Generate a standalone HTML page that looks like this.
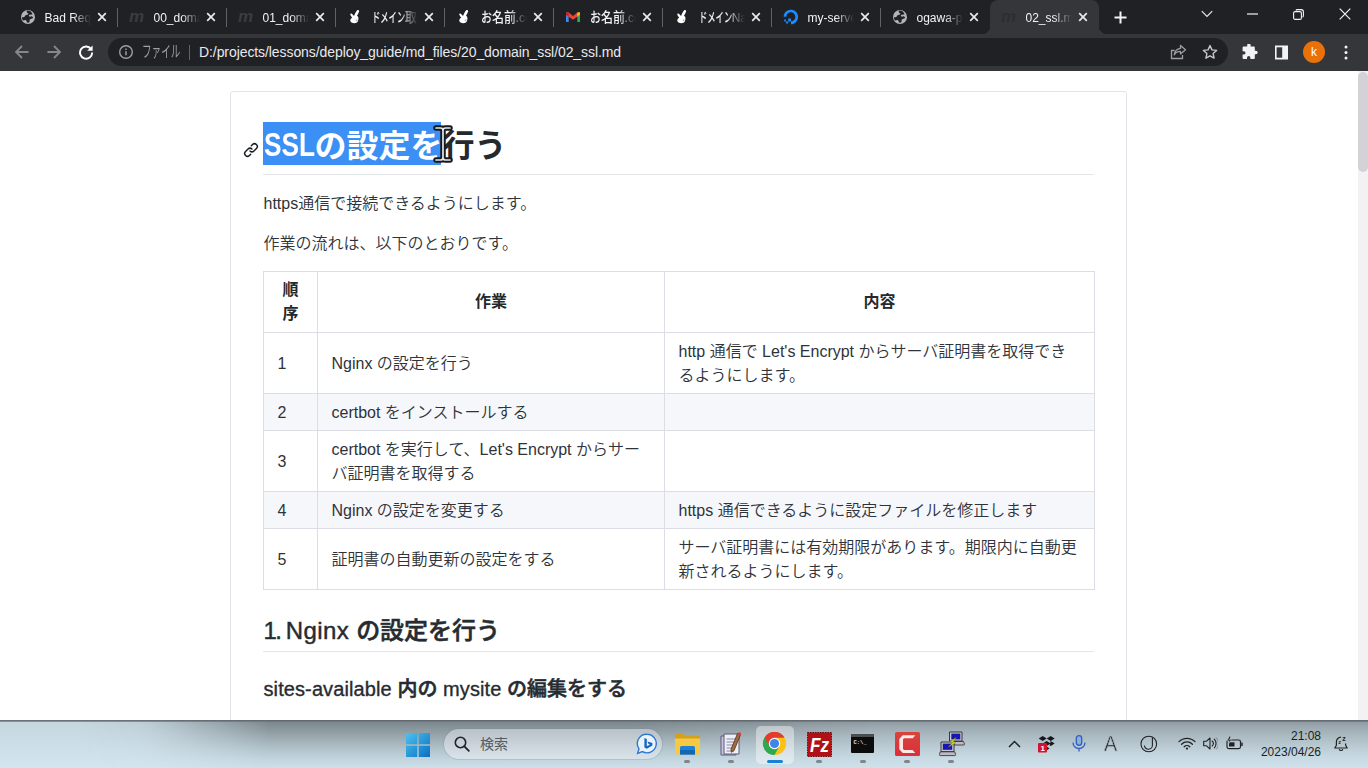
<!DOCTYPE html>
<html lang="ja">
<head>
<meta charset="utf-8">
<title>02_ssl.md</title>
<style>
*{box-sizing:border-box;margin:0;padding:0}
html,body{width:1368px;height:768px;overflow:hidden;background:#fff}
body{position:relative;font-family:"Liberation Sans","Noto Sans CJK JP",sans-serif;color:#24292e}
.abs{position:absolute}
/* ---------- browser chrome ---------- */
#tabstrip{position:absolute;left:0;top:0;width:1368px;height:34px;background:#202124}
#toolbar{position:absolute;left:0;top:34px;width:1368px;height:37px;background:#35363a}
.tab{position:absolute;top:0;height:34px;width:109px;color:#f1f3f4;font-size:12px}
.tab .ttl{position:absolute;left:36px;top:9px;width:46px;height:18px;line-height:18px;white-space:nowrap;overflow:hidden;
  -webkit-mask-image:linear-gradient(90deg,#000 60%,transparent 100%);mask-image:linear-gradient(90deg,#000 60%,transparent 100%)}
.tab .ttl i{font-style:normal;display:inline-block;transform-origin:0 50%}
.tab .ttl i{font-size:13.500px;font-weight:500;vertical-align:top}
.tab .ttl i.k4{transform:scaleX(.615);margin-right:-20.800px}
.tab .ttl i.k1{transform:scaleX(.82);margin-right:-2.400px}
.tab .ttl i.kj{transform:scaleX(.89);margin-right:-3px}
.tab .fav{position:absolute;left:11.500px;top:9px;width:16px;height:16px}
.tab .x{position:absolute;left:88px;top:12px;width:10px;height:10px}
.tab .sep{position:absolute;left:108.500px;top:8px;width:1px;height:19px;background:#5f6368}
#active{position:absolute;left:989.500px;top:0;width:109px;height:34px;background:#35363a;border-radius:8px 8px 0 0}
#active:before,#active:after{content:"";position:absolute;bottom:0;width:8px;height:8px;background:radial-gradient(circle at 0 0,transparent 8px,#35363a 8.5px)}
#active:before{left:-8px}
#active:after{right:-8px;background:radial-gradient(circle at 100% 0,transparent 8px,#35363a 8.5px)}
#omni{position:absolute;left:108px;top:4px;width:1120px;height:28px;border-radius:14px;background:#202124}
#omni .file{position:absolute;left:34px;top:4.500px;font-size:16px;line-height:18px;color:#9aa0a6;white-space:nowrap}
#omni .file i{font-style:normal;display:inline-block;transform-origin:0 50%;transform:scaleX(.6)}
#omni .osep{position:absolute;left:81px;top:7px;width:1px;height:15px;background:#5f6368}
#omni .url{position:absolute;left:91px;top:5px;font-size:14px;line-height:18px;color:#e8eaed;white-space:nowrap;letter-spacing:-.080px}
/* ---------- page ---------- */
#page{position:absolute;left:0;top:71px;width:1368px;height:649px;background:#fff;overflow:hidden}
#box{position:absolute;left:230px;top:20px;border-radius:3px;width:897px;height:900px;border:1px solid #e1e4e8;padding:32px}
#md{font-size:16px;line-height:24px;color:#2e3339;font-weight:350}
#md h1{color:#24292e;font-size:32px;line-height:40px;font-weight:700;padding-bottom:10px;border-bottom:1px solid #e4e6ea;margin:0 0 16px;position:relative;white-space:nowrap}
#md h1 .bg{position:absolute;left:.300px;top:-2px;width:178px;height:42.500px;background:#3c8ff5}
#md h1 .t{position:relative;top:1.700px;left:.500px}
#md h1 .sel{color:#fff}
#md h1 .lat{display:inline-block;transform:scale(.82,1.06);transform-origin:0 100%;margin-right:-11.200px}
#md h2{color:#262b31;font-size:24px;line-height:30px;font-weight:500;-webkit-text-stroke:.550px #282d33;padding-bottom:7px;border-bottom:1px solid #e4e6ea;margin:24px 0 16px;white-space:nowrap}
#md h3{color:#262b31;font-size:20px;line-height:25px;font-weight:500;-webkit-text-stroke:.550px #282d33;margin:24px 0 16px;white-space:nowrap}
#md h2 .t{position:relative;top:2px;left:.500px}
#md h2 .lat{font-weight:400;-webkit-text-stroke:.450px #282d33;letter-spacing:-.250px}
#md h3 .t{position:relative;top:1px;left:.500px}
#md h3 .lat{font-weight:400;-webkit-text-stroke:.350px #282d33;letter-spacing:.100px}
#md p{margin:0 0 16px;white-space:nowrap;transform:translate(.500px,.800px)}
#md table{border-collapse:collapse;table-layout:fixed;width:831px;margin:0 0 16px}
#md th,#md td{border:1px solid #dddee5;padding:6.800px 12.500px 5.200px 13.500px;vertical-align:middle;text-align:left}
#md th{color:#24292e;font-weight:700;text-align:center;padding:6px 13px 6px}
#md tr.alt td{background:#f6f7fb}
#scroll{position:absolute;left:1358px;top:0;width:10px;height:649px;background:#f2f1f4}
#scroll b{position:absolute;left:0;top:1px;width:10px;height:100px;border-radius:5px;background:#d3d2d6}
/* ---------- taskbar ---------- */
#task{position:absolute;left:0;top:720px;width:1368px;height:48px;
  background:linear-gradient(180deg,#8a969d 0,#9ca9b0 15%,#adbcc3 35%,#bdced6 60%,#c8dae3 80%,#cfe1eb 100%)}
#task .dark{position:absolute;left:150px;top:0;width:750px;height:48px;background:linear-gradient(180deg,#77828a 0,#8b989e 20%,#9fadb4 40%,#b1c2ca 60%,#c1d3dc 80%,#cddfe9 100%);-webkit-mask-image:linear-gradient(90deg,transparent 0,#000 120px,#000 480px,transparent 720px);mask-image:linear-gradient(90deg,transparent 0,#000 120px,#000 480px,transparent 720px)}
#task .lite{position:absolute;left:0;top:0;width:300px;height:48px;background:linear-gradient(180deg,#c5d6df,#d3e5ee);-webkit-mask-image:linear-gradient(90deg,#000 0,#000 70px,rgba(0,0,0,.85) 140px,rgba(0,0,0,.4) 200px,transparent 270px);mask-image:linear-gradient(90deg,#000 0,#000 70px,rgba(0,0,0,.85) 140px,rgba(0,0,0,.4) 200px,transparent 270px)}
#task .topline{position:absolute;left:0;top:0;width:1368px;height:2px;background:linear-gradient(180deg,#5e656a,rgba(110,120,126,.6))}
#search{position:absolute;left:444px;top:9px;width:218px;height:30px;border-radius:15px;background:linear-gradient(180deg,#b9c1c7,#d9e4ea);box-shadow:0 0 0 1px rgba(120,135,145,.25)}
#search span{position:absolute;left:36px;top:6px;font-size:14px;line-height:18px;color:#555b60}
.dot{position:absolute;top:40px;width:6px;height:3px;border-radius:2px;background:#7d868c}
#clock{position:absolute;right:47px;top:8px;text-align:right;font-size:12px;line-height:16px;color:#1b1f23;white-space:nowrap}
</style>
</head>
<body>

<!-- ================= TAB STRIP ================= -->
<div id="tabstrip">
  <div id="active"></div>
  <!--TABS-->
  <div class="tab" style="left:8.5px"><svg class="fav" viewBox="0 0 16 16"><circle cx="8" cy="8" r="7" fill="#b0b4b9"/><path d="M7.2 1.6c-1 .9-.4 2 .5 2.4 1.2.5.6 1.6-.4 1.7-1.3.1-2.2.6-2.6 1.7-.4 1-1.600 1.200-2.600 .700-.200 1.300 .100 2.500 .700 3.500 1-.200 2.100-.900 2.900-.500 1.100 .500 .600 1.700 1.500 2.300 .8.5 1.900 .2 2.300-.700 .4-.900-.300-1.600 .400-2.300 .7-.700 2-.300 2.700-1.100 .6-.700 .300-1.600-.500-1.900-1-.300-1.900.6-2.800 .100-.8-.500-.400-1.500 .400-1.800 1-.300 2.300 .100 2.800-.800C11.600 2.700 9.500 1.500 7.200 1.600z" fill="#202124"/></svg><div class="ttl">Bad Requ</div><svg class="x" viewBox="0 0 10 10"><path d="M1.200 1.200l7.600 7.600M8.800 1.200L1.200 8.800" stroke="#e8eaed" stroke-width="1.700" fill="none"/></svg><div class="sep"></div></div>
  <div class="tab" style="left:117.5px"><svg class="fav" viewBox="0 0 16 16"><text x="0" y="13" font-family="Liberation Sans,sans-serif" font-style="italic" font-weight="700" font-size="17" fill="#3b3c40">m</text></svg><div class="ttl">00_doma</div><svg class="x" viewBox="0 0 10 10"><path d="M1.200 1.200l7.600 7.600M8.800 1.200L1.200 8.800" stroke="#e8eaed" stroke-width="1.700" fill="none"/></svg><div class="sep"></div></div>
  <div class="tab" style="left:226.5px"><svg class="fav" viewBox="0 0 16 16"><text x="0" y="13" font-family="Liberation Sans,sans-serif" font-style="italic" font-weight="700" font-size="17" fill="#3b3c40">m</text></svg><div class="ttl">01_doma</div><svg class="x" viewBox="0 0 10 10"><path d="M1.200 1.200l7.600 7.600M8.800 1.200L1.200 8.800" stroke="#e8eaed" stroke-width="1.700" fill="none"/></svg><div class="sep"></div></div>
  <div class="tab" style="left:335.5px"><svg class="fav" viewBox="0 0 16 16"><path d="M10.200 1.200c1-.600 2.200 .100 1.900 1.300-.400 1.500-1.400 2.900-2.100 4.200 .900 .500 1.500 1.400 1.400 2.500 .100 1.600-.300 3.600-1.900 4.500-1.500 .700-3.500 .500-5-.200-1.300-.700-1.500-2.300-.800-3.500 .300-.600 .900-1 1.500-1.300-.700-.900-1.500-1.900-1.900-3-.200-.800 .700-1.400 1.400-1 .9.600 1.600 1.600 2.300 2.400 .9-2 1.700-4.300 3.200-5.900z" fill="#fff"/><circle cx="9.600" cy="11.300" r="1" fill="#bbb"/></svg><div class="ttl"><i class="k4">ドメイン</i><i class="kj">取得</i></div><svg class="x" viewBox="0 0 10 10"><path d="M1.200 1.200l7.600 7.600M8.800 1.200L1.200 8.800" stroke="#e8eaed" stroke-width="1.700" fill="none"/></svg><div class="sep"></div></div>
  <div class="tab" style="left:444.5px"><svg class="fav" viewBox="0 0 16 16"><path d="M10.200 1.200c1-.600 2.200 .100 1.900 1.300-.400 1.500-1.400 2.900-2.100 4.200 .900 .500 1.500 1.400 1.400 2.500 .100 1.600-.300 3.600-1.900 4.500-1.500 .700-3.500 .500-5-.200-1.300-.700-1.500-2.300-.800-3.500 .300-.600 .900-1 1.500-1.300-.700-.900-1.500-1.900-1.900-3-.200-.800 .700-1.400 1.400-1 .9.600 1.600 1.600 2.300 2.400 .9-2 1.700-4.300 3.200-5.900z" fill="#fff"/><circle cx="9.600" cy="11.300" r="1" fill="#bbb"/></svg><div class="ttl"><i class="k1">お</i><i class="kj">名前</i>.com</div><svg class="x" viewBox="0 0 10 10"><path d="M1.200 1.200l7.600 7.600M8.800 1.200L1.200 8.800" stroke="#e8eaed" stroke-width="1.700" fill="none"/></svg><div class="sep"></div></div>
  <div class="tab" style="left:553.5px"><svg class="fav" viewBox="0 0 16 16"><path d="M1 3.500h2.700v9.500H1z" fill="#4285f4"/><path d="M12.300 3.500H15v9.500h-2.700z" fill="#34a853"/><path d="M1 3.500l2.700 0L8 7l4.300-3.500 2.700 0v2.200L8 10.800 1 5.700z" fill="#ea4335"/><path d="M12.300 3.500H15v2.200l-2.700 2z" fill="#fbbc04"/><path d="M1 3.500h2.700v4.200L1 5.700z" fill="#c5221f"/></svg><div class="ttl"><i class="k1">お</i><i class="kj">名前</i>.com</div><svg class="x" viewBox="0 0 10 10"><path d="M1.200 1.200l7.600 7.600M8.800 1.200L1.200 8.800" stroke="#e8eaed" stroke-width="1.700" fill="none"/></svg><div class="sep"></div></div>
  <div class="tab" style="left:662.5px"><svg class="fav" viewBox="0 0 16 16"><path d="M10.200 1.200c1-.600 2.200 .100 1.900 1.300-.400 1.500-1.400 2.900-2.100 4.200 .900 .500 1.500 1.400 1.400 2.500 .100 1.600-.300 3.600-1.900 4.500-1.500 .700-3.500 .500-5-.200-1.300-.700-1.500-2.300-.800-3.500 .300-.600 .900-1 1.500-1.300-.700-.900-1.500-1.900-1.900-3-.200-.800 .700-1.400 1.400-1 .9.600 1.600 1.600 2.300 2.400 .9-2 1.700-4.300 3.200-5.900z" fill="#fff"/><circle cx="9.600" cy="11.300" r="1" fill="#bbb"/></svg><div class="ttl"><i class="k4">ドメイン</i>Navi</div><svg class="x" viewBox="0 0 10 10"><path d="M1.200 1.200l7.600 7.600M8.800 1.200L1.200 8.800" stroke="#e8eaed" stroke-width="1.700" fill="none"/></svg><div class="sep"></div></div>
  <div class="tab" style="left:771.5px"><svg class="fav" viewBox="0 0 16 16"><path d="M8 15.200v-2.900c3 0 5.200-3 4-6.100C11.500 4.900 10.500 4 9.300 3.600 6.200 2.600 3.500 4.700 3.500 7.700H.7C.7 3 5.200-.5 10.100 1c2.200.7 3.900 2.400 4.600 4.600C16.200 10.600 12.600 15.200 8 15.200z" fill="#1a8cff"/><path d="M5.200 9.600H8v2.800H5.200zM3 12.400h2.200v2.200H3zM1.200 10.600H3v1.800H1.200z" fill="#1a8cff"/></svg><div class="ttl">my-server</div><svg class="x" viewBox="0 0 10 10"><path d="M1.200 1.200l7.600 7.600M8.800 1.200L1.200 8.800" stroke="#e8eaed" stroke-width="1.700" fill="none"/></svg><div class="sep"></div></div>
  <div class="tab" style="left:880.5px"><svg class="fav" viewBox="0 0 16 16"><circle cx="8" cy="8" r="7" fill="#b0b4b9"/><path d="M7.2 1.6c-1 .9-.4 2 .5 2.4 1.2.5.6 1.6-.4 1.7-1.3.1-2.2.6-2.6 1.7-.4 1-1.600 1.200-2.600 .700-.200 1.300 .100 2.500 .700 3.500 1-.200 2.100-.900 2.900-.500 1.100 .500 .600 1.700 1.500 2.300 .8.5 1.900 .2 2.300-.700 .4-.900-.300-1.600 .400-2.300 .7-.700 2-.300 2.700-1.100 .6-.700 .300-1.600-.500-1.900-1-.300-1.900.6-2.800 .100-.8-.500-.400-1.500 .400-1.800 1-.300 2.300 .100 2.800-.800C11.600 2.700 9.500 1.500 7.200 1.600z" fill="#202124"/></svg><div class="ttl">ogawa-pr</div><svg class="x" viewBox="0 0 10 10"><path d="M1.200 1.200l7.600 7.600M8.800 1.200L1.200 8.800" stroke="#e8eaed" stroke-width="1.700" fill="none"/></svg></div>
  <div class="tab" style="left:989.5px"><svg class="fav" viewBox="0 0 16 16"><text x="0" y="13" font-family="Liberation Sans,sans-serif" font-style="italic" font-weight="700" font-size="17" fill="#2d2e31">m</text></svg><div class="ttl">02_ssl.md</div><svg class="x" viewBox="0 0 10 10"><path d="M1.200 1.200l7.600 7.600M8.800 1.200L1.200 8.800" stroke="#e8eaed" stroke-width="1.700" fill="none"/></svg></div>
  <!--/TABS-->
  <!--WC-->
  <svg class="abs" style="left:1114px;top:11px" width="13" height="13" viewBox="0 0 13 13"><path d="M6.500 .500v12M.500 6.500h12" stroke="#f1f3f4" stroke-width="2"/></svg>
  <svg class="abs" style="left:1201px;top:10px" width="12" height="8" viewBox="0 0 12 8"><path d="M.800 1.200L6 6.400l5.200-5.200" stroke="#e8eaed" stroke-width="1.200" fill="none"/></svg>
  <svg class="abs" style="left:1247px;top:13px" width="11" height="2" viewBox="0 0 11 2"><path d="M0 1h11" stroke="#f1f3f4" stroke-width="1.200"/></svg>
  <svg class="abs" style="left:1293px;top:9px" width="11" height="11" viewBox="0 0 11 11"><rect x=".600" y="2.600" width="7.800" height="7.800" rx="1.500" stroke="#f1f3f4" stroke-width="1.100" fill="none"/><path d="M2.800 1.400a1.800 1.800 0 0 1 1.500-.800h4a2.100 2.100 0 0 1 2.100 2.100v4a1.800 1.800 0 0 1-.800 1.500" stroke="#f1f3f4" stroke-width="1.100" fill="none"/></svg>
  <svg class="abs" style="left:1339px;top:8px" width="12" height="12" viewBox="0 0 12 12"><path d="M.700 .700l10.600 10.600M11.300 .700L.700 11.300" stroke="#f1f3f4" stroke-width="1.200"/></svg>
  <!--/WC-->
</div>

<!-- ================= TOOLBAR ================= -->
<div id="toolbar">
  <!--NAV-->
  <svg class="abs" style="left:14px;top:10px" width="16" height="16" viewBox="0 0 16 16"><path d="M14.600 8H2.600M8 2L2 8l6 6" stroke="#84878b" stroke-width="1.800" fill="none"/></svg>
  <svg class="abs" style="left:46px;top:10px" width="16" height="16" viewBox="0 0 16 16"><path d="M1.400 8h12M8 2l6 6-6 6" stroke="#84878b" stroke-width="1.800" fill="none"/></svg>
  <svg class="abs" style="left:78px;top:10px" width="16" height="16" viewBox="0 0 16 16"><path d="M13.200 5.200A6.100 6.100 0 1 0 14.200 8.400" stroke="#fff" stroke-width="1.900" fill="none"/><path d="M14.600 1.400v5.400H9.200z" fill="#fff"/></svg>
<!--/NAV-->
  <div id="omni">
    <!--OMNI-ICONS-->
    <svg class="abs" style="left:10px;top:6px" width="16" height="16" viewBox="0 0 16 16"><circle cx="8" cy="8" r="6.300" stroke="#9aa0a6" stroke-width="1.400" fill="none"/><path d="M8 7.200v4M8 4.500v1.400" stroke="#9aa0a6" stroke-width="1.500"/></svg>
    <svg class="abs" style="left:1062px;top:6px" width="17" height="16" viewBox="0 0 17 16"><path d="M4.500 6.500H1.500v8h11v-3.500" stroke="#9aa0a6" stroke-width="1.300" fill="none"/><path d="M10.500 1.500l5 4.200-5 4.200V7.400c-3 0-5 1-6.200 3.400.3-3.400 2.400-6 6.200-6.500z" stroke="#9aa0a6" stroke-width="1.300" fill="none" stroke-linejoin="round"/></svg>
    <svg class="abs" style="left:1094px;top:6px" width="16" height="16" viewBox="0 0 16 16"><path d="M8 1.600l1.950 4.300 4.650.5-3.500 3.150 1 4.600L8 11.800l-4.100 2.350 1-4.600L1.400 6.400l4.650-.5z" stroke="#c4c7cb" stroke-width="1.400" fill="none" stroke-linejoin="round"/></svg>
<!--/OMNI-ICONS-->
    <div class="file"><i>ファイル</i></div>
    <div class="osep"></div>
    <div class="url">D:/projects/lessons/deploy_guide/md_files/20_domain_ssl/02_ssl.md</div>
  </div>
  <!--RIGHT-ICONS-->
  <svg class="abs" style="left:1241px;top:10px" width="17" height="17" viewBox="0 0 17 17"><path d="M6.200 1.200a1.700 1.700 0 0 1 3.400 0v1.300h3.200a1 1 0 0 1 1 1v3.200h1.100a1.800 1.800 0 0 1 0 3.600h-1.100v3.700a1 1 0 0 1-1 1H9.400v-1.200a1.700 1.700 0 0 0-3.400 0V15H2.600a1 1 0 0 1-1-1v-3.400h1.200a1.700 1.700 0 0 0 0-3.400H1.600V3.500a1 1 0 0 1 1-1h3.600z" fill="#f1f3f4"/></svg>
  <svg class="abs" style="left:1274px;top:11px" width="15" height="15" viewBox="0 0 15 15"><path d="M1 .5h13v14H1z" fill="#f1f3f4"/><path d="M2.600 2.300h5.600v10.400H2.600z" fill="#35363a"/></svg>
  <div class="abs" style="left:1303px;top:7px;width:22px;height:22px;border-radius:11px;background:#e8710a;color:#fff;font-size:12px;line-height:22px;text-align:center">k</div>
  <svg class="abs" style="left:1344px;top:11px" width="4" height="15" viewBox="0 0 4 15"><circle cx="2" cy="2" r="1.500" fill="#f1f3f4"/><circle cx="2" cy="7.500" r="1.500" fill="#f1f3f4"/><circle cx="2" cy="13" r="1.500" fill="#f1f3f4"/></svg>
<!--/RIGHT-ICONS-->
</div>

<!-- ================= PAGE ================= -->
<div id="page">
  <div id="box">
    <div id="md">
      <h1><svg style="position:absolute;left:-20.400px;top:18px" width="16" height="16" viewBox="0 0 16 16"><path fill="#1b1f23" d="M7.775 3.275a.75.75 0 001.06 1.06l1.250-1.250a2 2 0 112.830 2.830l-2.500 2.500a2 2 0 01-2.830 0 .75.75 0 00-1.060 1.060 3.500 3.500 0 004.950 0l2.500-2.500a3.500 3.500 0 00-4.950-4.950l-1.250 1.250zm-4.690 9.640a2 2 0 010-2.830l2.500-2.500a2 2 0 012.830 0 .75.75 0 001.060-1.060 3.500 3.500 0 00-4.950 0l-2.500 2.500a3.500 3.500 0 004.950 4.950l1.250-1.250a.75.75 0 00-1.060-1.060l-1.250 1.250a2 2 0 01-2.830 0z"/></svg><span class="bg"></span><span class="t"><span class="sel"><span class="lat">SSL</span>の設定を</span>行う</span></h1>
      <p>https通信で接続できるようにします。</p>
      <p>作業の流れは、以下のとおりです。</p>
      <table>
        <colgroup><col style="width:54px"><col style="width:347px"><col style="width:430px"></colgroup>
        <tr><th>順<br>序</th><th>作業</th><th>内容</th></tr>
        <tr><td>1</td><td>Nginx の設定を行う</td><td>http 通信で Let's Encrypt からサーバ証明書を取得でき<br>るようにします。</td></tr>
        <tr class="alt"><td>2</td><td>certbot をインストールする</td><td></td></tr>
        <tr><td>3</td><td>certbot を実行して、Let's Encrypt からサー<br>バ証明書を取得する</td><td></td></tr>
        <tr class="alt"><td>4</td><td>Nginx の設定を変更する</td><td>https 通信できるように設定ファイルを修正します</td></tr>
        <tr><td>5</td><td>証明書の自動更新の設定をする</td><td>サーバ証明書には有効期限があります。期限内に自動更<br>新されるようにします。</td></tr>
      </table>
      <h2><span class="t"><span class="lat" style="letter-spacing:-1.500px">1. </span><span class="lat" style="letter-spacing:.400px">Nginx </span>の設定を行う</span></h2>
      <h3><span class="t"><span class="lat">sites-available </span>内の<span class="lat"> mysite </span>の編集をする</span></h3>
    </div>
  </div>
  <svg id="ibeam" style="position:absolute;left:432.500px;top:53px" width="20" height="40" viewBox="0 0 20 40"><g fill="none" stroke-linecap="round"><path d="M3 4H7.500Q10 4 10 6.500V33.500Q10 36 7.500 36H3M17 4H12.500Q10 4 10 6.500M10 33.500Q10 36 12.500 36H17" stroke="#15181c" stroke-width="5.500"/><path d="M3 4H7.500Q10 4 10 6.500V33.500Q10 36 7.500 36H3M17 4H12.500Q10 4 10 6.500M10 33.500Q10 36 12.500 36H17" stroke="#e4e6e8" stroke-width="1.700"/></g></svg>
  <div id="scroll"><b></b></div>
</div>

<!-- ================= TASKBAR ================= -->
<div id="task">
  <div class="dark"></div>
  <div class="lite"></div>
  <div class="topline"></div>
  <div id="search"><span>検索</span></div>
  <!--TASK-ICONS-->
  <svg class="abs" style="left:406px;top:13px" width="24" height="24" viewBox="0 0 24 24"><defs><linearGradient id="wl" x1="0" y1="0" x2="1" y2="1"><stop offset="0" stop-color="#4cc2f0"/><stop offset="1" stop-color="#0a6fc2"/></linearGradient></defs><path d="M0 0h11.300v11.300H0zM12.700 0H24v11.300H12.700zM0 12.700h11.300V24H0zM12.700 12.700H24V24H12.700z" fill="url(#wl)"/></svg>
  <svg class="abs" style="left:454px;top:16px" width="16" height="16" viewBox="0 0 16 16"><circle cx="6.500" cy="6.500" r="5.200" stroke="#1f2326" stroke-width="1.600" fill="none"/><path d="M10.400 10.400l4.400 4.400" stroke="#1f2326" stroke-width="1.800" stroke-linecap="round"/></svg>
  <svg class="abs" style="left:636px;top:13px" width="22" height="22" viewBox="0 0 22 22"><path d="M11 1.200a9.300 9.300 0 1 1-4.600 17.400L1.600 20.400l1.400-4.600A9.300 9.300 0 0 1 11 1.200z" fill="#e9f3fb" stroke="#2a77d4" stroke-width="1.400"/><path d="M8.400 5l2.400.9v7.400l3.200-1.800-1.600-.8-1-2.300 5 1.700v2.500l-5.600 3.200-2.400-1.400z" fill="#1565c8"/></svg>
  <svg class="abs" style="left:675px;top:12px" width="25" height="24" viewBox="0 0 25 24"><path d="M0 2.500A1.500 1.500 0 0 1 1.500 1h6.300l2.400 2.400H23.500A1.500 1.500 0 0 1 25 4.900V8H0z" fill="#d69f1c"/><path d="M0 6.500h25v14.500a1.500 1.500 0 0 1-1.500 1.500h-22A1.500 1.500 0 0 1 0 21z" fill="#f6c945"/><path d="M5 15.500a1.500 1.500 0 0 1 1.500-1.500h12a1.500 1.500 0 0 1 1.500 1.500v7H5z" fill="#1d82d6"/><path d="M5 18h15v4.500H5z" fill="#1266b3"/></svg>
  <svg class="abs" style="left:720px;top:11px" width="23" height="26" viewBox="0 0 23 26"><path d="M1 5h15v19H1z" fill="#c9c4dc" stroke="#5d587a" stroke-width="1"/><path d="M4 3h15v20H4z" fill="#efeff6" stroke="#5d587a" stroke-width="1"/><path d="M6.500 8h9M6.500 11h9M6.500 14h8M6.500 17h7M6.500 20h6" stroke="#8b88a6" stroke-width="1"/><path d="M17.500 2.500l3 1.200-6.500 16-2.600 1.600-.400-3z" fill="#a46a3c" stroke="#4a3424" stroke-width=".800"/><circle cx="19.500" cy="2.800" r="1.600" fill="#d8413a"/></svg>
  <div class="abs" style="left:756px;top:6px;width:38px;height:38px;border-radius:5px;background:rgba(255,255,255,.42)"></div>
  <svg class="abs" style="left:762px;top:11px" width="25" height="25" viewBox="0 0 48 48"><path d="M24 24L4.900 13A22 22 0 0 1 43.100 13z" fill="#e33b2e"/><path d="M24 24L43.100 13A22 22 0 0 1 24 46z" fill="#fbc116"/><path d="M24 24L24 46A22 22 0 0 1 4.900 13z" fill="#2da94f"/><path d="M24 13h19.100A22 22 0 0 0 4.900 13L14.500 29.500z" fill="#e33b2e"/><path d="M33.500 29.500L43.100 13H24z" fill="#fbc116"/><path d="M33.500 29.500L43.100 13A22 22 0 0 1 24 46z" fill="#fbc116"/><path d="M14.500 29.500L24 46A22 22 0 0 1 4.900 13z" fill="#2da94f"/><path d="M14.500 29.500L24 46 33.500 29.500z" fill="#2da94f"/><circle cx="24" cy="24" r="11" fill="#fff"/><circle cx="24" cy="24" r="8.800" fill="#3f83ec"/></svg>
  <div class="abs" style="left:767px;top:40px;width:16px;height:3px;border-radius:2px;background:#1a7fd8"></div>
  <svg class="abs" style="left:807px;top:12px" width="25" height="25" viewBox="0 0 25 25"><rect x=".5" y=".5" width="24" height="24" fill="#b11116" stroke="#6c0a0d" stroke-width="1" stroke-dasharray="1.500 1"/><text x="3" y="20" font-family="Liberation Sans,sans-serif" font-weight="700" font-style="italic" font-size="20" fill="#fff" textLength="19" lengthAdjust="spacingAndGlyphs">Fz</text></svg>
  <svg class="abs" style="left:851px;top:14px" width="23" height="19" viewBox="0 0 23 19"><rect x="0" y="0" width="23" height="19" rx="1" fill="#0c0c0c"/><path d="M0 0h23v3H0z" fill="#4a4d50"/><text x="2.500" y="9.500" font-family="Liberation Mono,monospace" font-weight="700" font-size="5.500" fill="#e6e6e6">C:\_</text></svg>
  <svg class="abs" style="left:895px;top:12px" width="25" height="24" viewBox="0 0 25 24"><defs><linearGradient id="cg" x1="0" y1="0" x2="0" y2="1"><stop offset="0" stop-color="#d4463c"/><stop offset="1" stop-color="#e02d3a"/></linearGradient></defs><rect width="25" height="24" rx="1.500" fill="url(#cg)"/><path d="M20.300 3.200H7.700L4.300 6.900v10.400L7.700 21h12.600l-2.800-3.100H8.900L8 16.700V7.500l.900-1.200h8.900z" fill="#fbe9e7"/></svg>
  <svg class="abs" style="left:939px;top:11px" width="26" height="26" viewBox="0 0 26 26"><path d="M10.500 1h12.500v9H10.500z" fill="#c9c7cf" stroke="#2a2a30" stroke-width=".900"/><path d="M12.300 2.600h9v5.800h-9z" fill="#1717b4"/><path d="M14 10.500h10.500l1 2.600a.8.800 0 0 1-.8.900H15z" fill="#bdbbc2" stroke="#2a2a30" stroke-width=".800"/><path d="M2 11h13v9.500H2z" fill="#c9c7cf" stroke="#2a2a30" stroke-width=".900"/><path d="M3.800 12.600h9.400v6.200H3.800z" fill="#1717b4"/><path d="M1.200 20.800h14.600l.8 2.800a.9.900 0 0 1-.9 1H1.300a.9.900 0 0 1-.9-1z" fill="#bdbbc2" stroke="#2a2a30" stroke-width=".800"/><path d="M17 6.500l-6 4.500 2.800.5-4.300 4.500 7.500-4.500-2.800-.700z" fill="#d3e01e" stroke="#8a9600" stroke-width=".500"/></svg>
  <div class="dot" style="left:684px"></div>
  <div class="dot" style="left:728px"></div>
  <div class="dot" style="left:816px"></div>
  <div class="dot" style="left:860px"></div>
  <div class="dot" style="left:904px"></div>
  <div class="dot" style="left:948px"></div>
  <svg class="abs" style="left:1008px;top:20px" width="13" height="8" viewBox="0 0 13 8"><path d="M1 7l5.500-5.500L12 7" stroke="#1f2326" stroke-width="1.500" fill="none"/></svg>
  <svg class="abs" style="left:1038px;top:16px" width="17" height="17" viewBox="0 0 17 17"><path d="M4.700 0l4 2.500-4 2.500-4-2.500zM12.700 0l4 2.500-4 2.500-4-2.500zM8.700 5l4 2.500-4 2.500-4-2.500zM12.700 5l4 2.500-4 2.500-1-0.600zM8.700 10.600l2.800 1.800-2.800 1.800z" fill="#16181b"/><rect x="0" y="7" width="9" height="9.500" rx="1" fill="#d5122f"/><text x="2.600" y="14.600" font-family="Liberation Sans,sans-serif" font-weight="700" font-size="8" fill="#fff">1</text></svg>
  <svg class="abs" style="left:1072px;top:15px" width="14" height="17" viewBox="0 0 14 17"><rect x="4.300" y=".700" width="5.400" height="9.600" rx="2.700" fill="#8eaee0" stroke="#2c60bd" stroke-width="1.300"/><path d="M1 7.500a6 6 0 0 0 12 0M7 13.500v3" stroke="#2c60bd" stroke-width="1.300" fill="none"/></svg>
  <div class="abs" style="left:1103.500px;top:11px;font-family:'Liberation Sans',sans-serif;font-size:22px;line-height:26px;color:#1f2326;font-weight:400;-webkit-text-stroke:.700px #a7b6bd;transform:scaleX(.9);transform-origin:0 0">A</div>
  <svg class="abs" style="left:1140px;top:15px" width="18" height="18" viewBox="0 0 18 18"><circle cx="8.800" cy="9" r="7.800" stroke="#1f2326" stroke-width="1.100" fill="none"/><path d="M12.400 2.600v7.400a4 4 0 0 1-8 .500" stroke="#1f2326" stroke-width="1.100" fill="none"/></svg>
  <svg class="abs" style="left:1178px;top:17px" width="18" height="13" viewBox="0 0 18 13"><path d="M1 4.600a11.300 11.300 0 0 1 16 0M3.600 7.200a7.600 7.600 0 0 1 10.800 0M6.200 9.700a4 4 0 0 1 5.600 0" stroke="#1f2326" stroke-width="1.300" fill="none" stroke-linecap="round"/><circle cx="9" cy="11.600" r="1.100" fill="#1f2326"/></svg>
  <svg class="abs" style="left:1203px;top:17px" width="15" height="13" viewBox="0 0 15 13"><path d="M.700 4.300h2.600L7 1v11L3.300 8.700H.700z" stroke="#1f2326" stroke-width="1.100" fill="none" stroke-linejoin="round"/><path d="M9.200 4a3.600 3.600 0 0 1 0 5M11.300 2.200a6.200 6.200 0 0 1 0 8.600" stroke="#1f2326" stroke-width="1.100" fill="none" stroke-linecap="round"/><path d="M13.300 .700a8.500 8.500 0 0 1 0 11.600" stroke="#1f2326" stroke-width="1" fill="none" stroke-linecap="round" opacity=".35"/></svg>
  <svg class="abs" style="left:1226px;top:16px" width="18" height="14" viewBox="0 0 18 14"><rect x="1" y="4" width="13.500" height="8.600" rx="1.800" stroke="#1f2326" stroke-width="1.200" fill="none"/><path d="M15.300 6.600h1.400v3.400h-1.400z" fill="#1f2326"/><path d="M3 6.300h5.500v4.200H3z" fill="#1f2326"/><path d="M3.200 .300L1.200 4.800h2l-1 3.500 3.400-4.600H3.600l1.400-3.400z" fill="#1f2326" stroke="#cfdde6" stroke-width=".500"/></svg>
  <svg class="abs" style="left:1333px;top:15px" width="16" height="17" viewBox="0 0 16 17"><path d="M8 2.200a4.600 4.600 0 0 0-4.600 4.600v3.400L1.800 13h12.400l-1.600-2.800V8.500" stroke="#1f2326" stroke-width="1.200" fill="none" stroke-linejoin="round"/><path d="M6.200 14.200a1.900 1.900 0 0 0 3.600 0" stroke="#1f2326" stroke-width="1.200" fill="none"/><text x="5.200" y="9" font-family="Liberation Sans,sans-serif" font-weight="700" font-size="5.500" fill="#1f2326">z</text><text x="9.300" y="6.200" font-family="Liberation Sans,sans-serif" font-weight="700" font-size="7" fill="#1f2326">z</text></svg>
<!--/TASK-ICONS-->
  <div id="clock">21:08<br>2023/04/26</div>
</div>

</body>
</html>
